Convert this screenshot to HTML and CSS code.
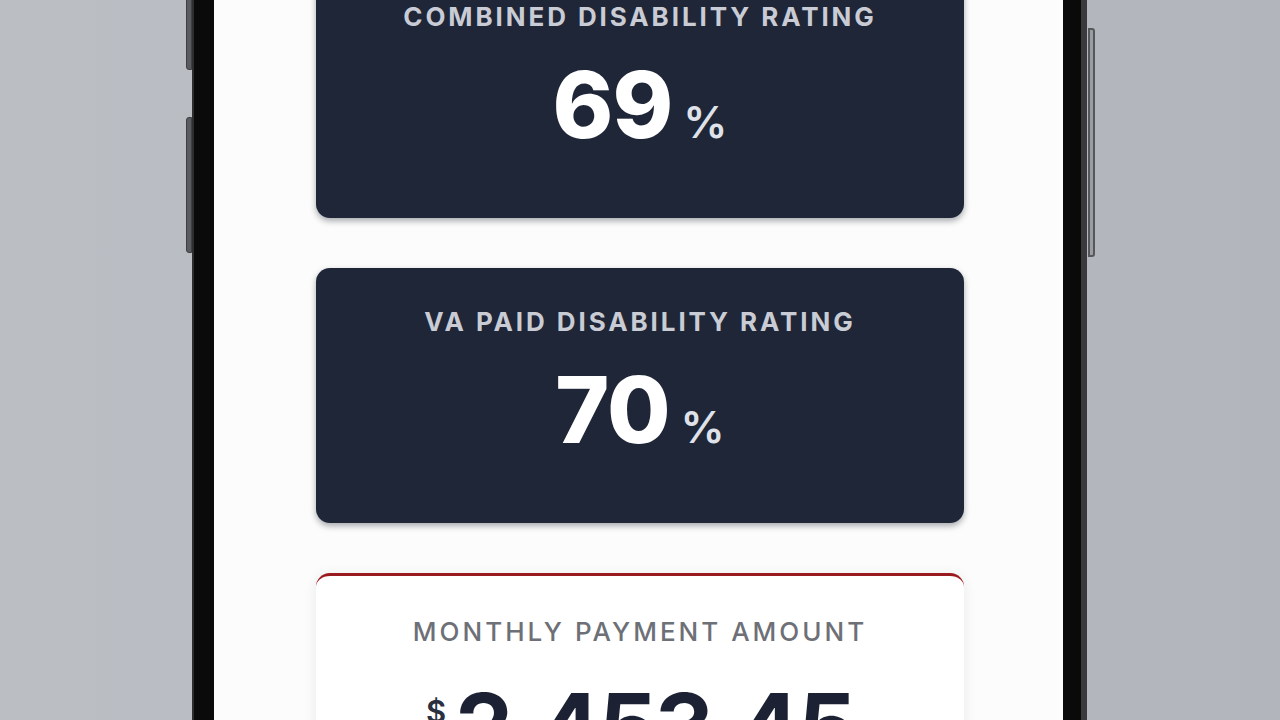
FILE: index.html
```html
<!DOCTYPE html>
<html lang="en">
<head>
<meta charset="utf-8">
<title>Disability Rating</title>
<link rel="stylesheet" href="styles.css">
</head>
<body>
<div class="stage">
  <div class="phone">
    <span class="btn btn-left-1"></span>
    <span class="btn btn-left-2"></span>
    <span class="btn btn-right"></span>
    <div class="screen">
      <section class="card card-dark">
        <h2 class="label">COMBINED DISABILITY RATING</h2>
        <div class="value"><span class="num">69</span><span class="pct">%</span></div>
      </section>
      <section class="card card-dark">
        <h2 class="label">VA PAID DISABILITY RATING</h2>
        <div class="value"><span class="num">70</span><span class="pct">%</span></div>
      </section>
      <section class="card card-light">
        <h2 class="label label-light">MONTHLY PAYMENT AMOUNT</h2>
        <div class="value value-money"><span class="dollar">$</span><span class="num num-dark">2,453.45</span></div>
      </section>
    </div>
  </div>
</div>
</body>
</html>
```
FILE: styles.css
```css
* { box-sizing: border-box; margin: 0; padding: 0; }
html, body { width: 1280px; height: 720px; overflow: hidden; }
body {
  font-family: "Inter", "Liberation Sans", sans-serif;
  background: linear-gradient(90deg, #bbbec3 0%, #b7bac0 40%, #b2b5bb 100%);
}
.stage {
  display: flex;
  justify-content: flex-start;
  padding-left: 192px;
}
.phone {
  position: relative;
  width: 895px;
  height: 1100px;
  margin-top: -100px;
  background: #0a0a0b;
  border-left: 2px solid #2e2e30;
  border-right: 6px solid #3a3a3d;
  border-radius: 60px;
  padding: 20px 18px 20px 20px;
}
.btn {
  position: absolute;
  width: 6px;
  background: #5a5b5e;
  border: 1px solid #3e3f42;
}
.btn-left-1 { left: -8px; top: 40px; height: 130px; border-radius: 3px 0 0 3px; }
.btn-left-2 { left: -8px; top: 217px; height: 136px; border-radius: 3px 0 0 3px; }
.btn-right {
  right: -14px; top: 128px; height: 229px; width: 7px;
  background: #9a9da2; border: 2px solid #55575b; border-radius: 0 3px 3px 0;
}
.screen {
  background: #fcfcfc;
  height: 100%;
  border-radius: 44px;
  padding: 43px 99px 0 102px;
  display: flex;
  flex-direction: column;
  gap: 50px;
}
.card {
  height: 255px;
  border-radius: 14px;
  display: flex;
  flex-direction: column;
  align-items: center;
  padding-top: 39px;
}
.card-dark {
  background: #1f2638;
  box-shadow: 0 3px 6px rgba(10, 14, 25, 0.35);
}
.card-light {
  background: #ffffff;
  border-top: 3px solid #9a1b1f;
  box-shadow: 0 2px 14px rgba(0, 0, 0, 0.08);
  padding-top: 41px;
}
.label {
  font-size: 26px;
  line-height: 30px;
  font-weight: 700;
  letter-spacing: 2.9px;
  color: #c9ccd4;
  white-space: nowrap;
}
.label-light {
  color: #6d7077;
  font-weight: 500;
  letter-spacing: 3px;
}
.value {
  margin-top: 27px;
  display: flex;
  align-items: baseline;
  gap: 11px;
  color: #ffffff;
}
.num {
  font-size: 92px;
  line-height: 92px;
  font-weight: 800;
  letter-spacing: -1px;
}
.pct {
  font-size: 44px;
  line-height: 44px;
  font-weight: 600;
  color: #dfe2e8;
}
.value-money { gap: 9px; margin-top: 34px; }
.dollar {
  font-size: 31px;
  font-weight: 600;
  color: #2a3040;
  align-self: flex-start;
  margin-top: 12px;
}
.num-dark {
  color: #1c2233;
  font-weight: 700;
  letter-spacing: -2.5px;
}
```
